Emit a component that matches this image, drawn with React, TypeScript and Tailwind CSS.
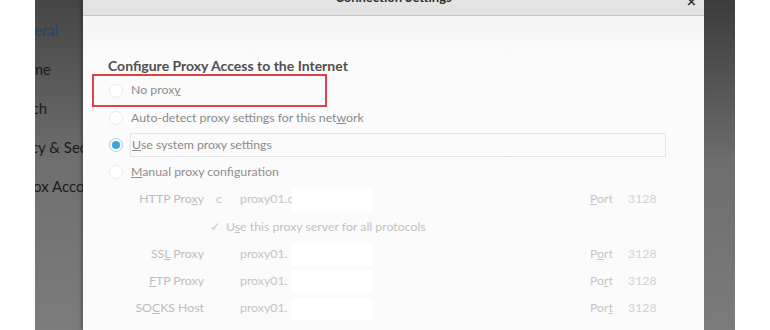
import React from "react";

const font = { fontFamily: '"Lato", "Noto Sans", sans-serif' };

const Radio: React.FC<{ checked?: boolean }> = ({ checked }) => (
  <span
    className={
      "ml-px flex h-[14px] w-[14px] shrink-0 items-center justify-center rounded-full border bg-white " +
      (checked ? "border-[#a9d3ea]" : "border-[#ececec]")
    }
  >
    {checked && <span className="h-[8px] w-[8px] rounded-full bg-[#3aa6dc]" />}
  </span>
);

const Redacted: React.FC<{ w: number }> = ({ w }) => (
  <span className="inline-block h-[22px] bg-white" style={{ width: w }} />
);

const ProxyRow: React.FC<{
  label: React.ReactNode;
  pre?: string;
  host: string;
  port: React.ReactNode;
}> = ({ label, pre, host, port }) => (
  <div className="flex h-[27.25px] items-center text-[12.3px] text-[#bdbdbd]">
    <div className="w-[96px] text-right">{label}</div>
    <div className="ml-[8px] flex w-[160px] items-center">
      <span className="w-[28px] pl-[4px] text-[#c4c4c4]">{pre}</span>
      <span className="w-[52px] text-[#c4c4c4]">{host}</span>
      <Redacted w={80} />
    </div>
    <div className="ml-[218px] w-[38px] text-[#c6c6c6]">{port}</div>
    <div className="text-[#d2d2d2]">3128</div>
  </div>
);

export default function App() {
  return (
    <div className="flex h-[330px] w-[770px] overflow-hidden bg-white" style={font}>
      <div className="w-[35px] shrink-0 bg-white" />

      {/* dimmed preferences sidebar */}
      <div className="flex w-[48px] shrink-0 flex-col overflow-hidden bg-gradient-to-b from-[#454545] via-[#6f6f6f] to-[#7c7c7c] pt-[19px] text-[15px] text-[#1c1c1c]">
        <div className="-ml-[28px] h-[39px] whitespace-nowrap text-[#22456d]">General</div>
        <div className="-ml-[24px] h-[39px] whitespace-nowrap">Home</div>
        <div className="-ml-[32px] h-[39px] whitespace-nowrap">Search</div>
        <div className="-ml-[37px] h-[39px] whitespace-nowrap">Privacy &amp; Security</div>
        <div className="-ml-[32px] h-[39px] whitespace-nowrap">Firefox Account</div>
      </div>

      {/* dialog */}
      <div className="relative flex w-[621px] shrink-0 flex-col bg-[#fbfbfb] shadow-[-2px_0_3px_rgba(0,0,0,0.25)]">
        <div className="relative flex h-[16px] items-start justify-center overflow-hidden border-b border-[#c3c3c3] bg-[#e3e3e3]">
          <span className="-mt-[11px] text-[13px] font-bold leading-[17px] text-[#2e2e2e]">
            Connection Settings
          </span>
          <span className="absolute right-[8px] -top-[11px] text-[16px] font-bold text-[#333]">×</span>
        </div>

        <div className="flex flex-col bg-gradient-to-b from-[#f4f4f4] to-[#fbfbfb] to-[15%] pl-[25px]">
          <div className="mt-[41px] h-[20px] text-[14px] font-bold leading-[18px] text-[#4f4f4f]">
            Configure Proxy Access to the Internet
          </div>

          <div className="flex h-[27.25px] items-center text-[12.3px] text-[#8c8c8c]">
            <Radio />
            <span className="ml-[8px]">
              No prox<u>y</u>
            </span>
          </div>
          <div className="flex h-[27.25px] items-center text-[12.3px] text-[#8a8a8a]">
            <Radio />
            <span className="ml-[8px]">
              Auto-detect proxy settings for this net<u>w</u>ork
            </span>
          </div>
          <div className="flex h-[27.25px] items-center text-[12.3px] text-[#8a8a8a]">
            <Radio checked />
            <span className="ml-[7px] mr-[38px] flex h-[24px] flex-1 items-center border border-[#e4e4e4] pl-px">
              <u>U</u>se system proxy settings
            </span>
          </div>
          <div className="flex h-[27.25px] items-center text-[12.3px] text-[#8e8e8e]">
            <Radio />
            <span className="ml-[8px]">
              <u>M</u>anual proxy configuration
            </span>
          </div>

          <ProxyRow
            label={
              <>
                HTTP Pro<u>x</u>y
              </>
            }
            pre="c"
            host="proxy01.c"
            port={
              <>
                <u>P</u>ort
              </>
            }
          />
          <div className="flex h-[27.25px] items-center text-[12.3px] text-[#c2c2c2]">
            <span className="ml-[102px] w-[16px] text-[12px] text-[#a9d2dc]">✓</span>
            <span>
              U<u>s</u>e this proxy server for all protocols
            </span>
          </div>
          <ProxyRow
            label={
              <>
                SS<u>L</u> Proxy
              </>
            }
            host="proxy01."
            port={
              <>
                P<u>o</u>rt
              </>
            }
          />
          <ProxyRow
            label={
              <>
                <u>F</u>TP Proxy
              </>
            }
            host="proxy01."
            port={
              <>
                Po<u>r</u>t
              </>
            }
          />
          <ProxyRow
            label={
              <>
                SO<u>C</u>KS Host
              </>
            }
            host="proxy01."
            port={
              <>
                Por<u>t</u>
              </>
            }
          />
        </div>

        {/* annotation */}
        <div className="absolute left-[9px] top-[74px] h-[33px] w-[235px] border-2 border-[#e0404a]" />
      </div>

      <div className="w-[31px] shrink-0 bg-gradient-to-b from-[#3c3c3c] via-[#6e6e6e] to-[#7b7b7b]" />
      <div className="flex-1 bg-white" />
    </div>
  );
}
